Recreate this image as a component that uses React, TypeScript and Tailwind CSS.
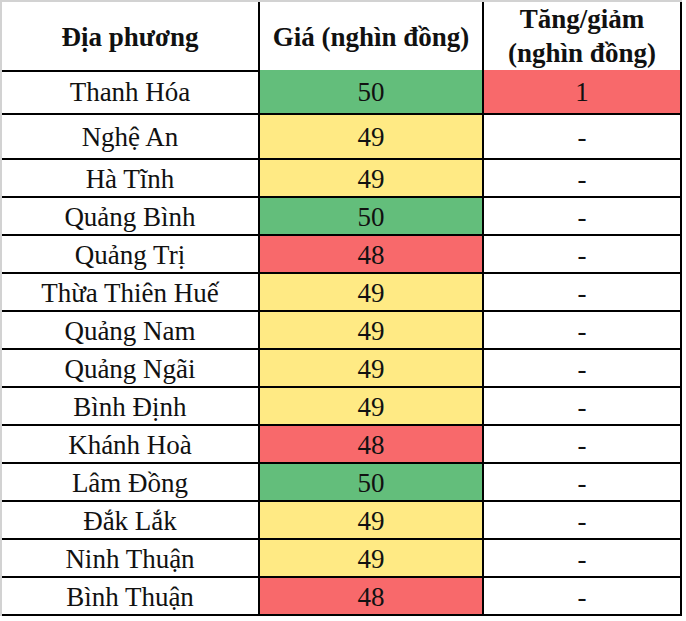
import React from "react";

const G = "bg-[#63be7b]";
const Y = "bg-[#ffea84]";
const R = "bg-[#f8696b]";

type Row = { name: string; price: string; pc: string; change: string; cc?: string; h: string };

const rows: Row[] = [
  { name: "Thanh Hóa", price: "50", pc: G, change: "1", cc: R, h: "h-[45px]" },
  { name: "Nghệ An", price: "49", pc: Y, change: "-", h: "h-[45px]" },
  { name: "Hà Tĩnh", price: "49", pc: Y, change: "-", h: "h-[38px]" },
  { name: "Quảng Bình", price: "50", pc: G, change: "-", h: "h-[38px]" },
  { name: "Quảng Trị", price: "48", pc: R, change: "-", h: "h-[38px]" },
  { name: "Thừa Thiên Huế", price: "49", pc: Y, change: "-", h: "h-[38px]" },
  { name: "Quảng Nam", price: "49", pc: Y, change: "-", h: "h-[38px]" },
  { name: "Quảng Ngãi", price: "49", pc: Y, change: "-", h: "h-[38px]" },
  { name: "Bình Định", price: "49", pc: Y, change: "-", h: "h-[38px]" },
  { name: "Khánh Hoà", price: "48", pc: R, change: "-", h: "h-[38px]" },
  { name: "Lâm Đồng", price: "50", pc: G, change: "-", h: "h-[38px]" },
  { name: "Đắk Lắk", price: "49", pc: Y, change: "-", h: "h-[38px]" },
  { name: "Ninh Thuận", price: "49", pc: Y, change: "-", h: "h-[38px]" },
  { name: "Bình Thuận", price: "48", pc: R, change: "-", h: "h-[38px]" },
];

const cell = "flex items-center justify-center border-r-2 border-b-2 border-black text-center";

export default function App() {
  return (
    <div
      className="w-[686px] h-[621px] bg-white text-[#111]"
      style={{ fontFamily: '"Liberation Serif", "Times New Roman", serif' }}
    >
      <div className="inline-flex flex-col border-t-2 border-l-2 border-[#d2d2d2]">
        <div className="grid grid-cols-[258px_224px_198px] h-[68px] font-bold text-[27px] leading-[34px]">
          <div className={cell + " pt-[2px]"}>Địa phương</div>
          <div className={cell + " pt-[2px]"}>Giá (nghìn đồng)</div>
          <div className={cell + " flex-col"}>
            <span>Tăng/giảm</span>
            <span>(nghìn đồng)</span>
          </div>
        </div>
        {rows.map((r) => (
          <div key={r.name} className={`grid grid-cols-[258px_224px_198px] ${r.h} text-[27px] leading-none`}>
            <div className={`${cell} pt-[2px]`}>{r.name}</div>
            <div className={`${cell} pt-[2px] ${r.pc}`}>{r.price}</div>
            <div className={`${cell} pt-[2px] ${r.cc ?? ""}`}>{r.change}</div>
          </div>
        ))}
      </div>
    </div>
  );
}
